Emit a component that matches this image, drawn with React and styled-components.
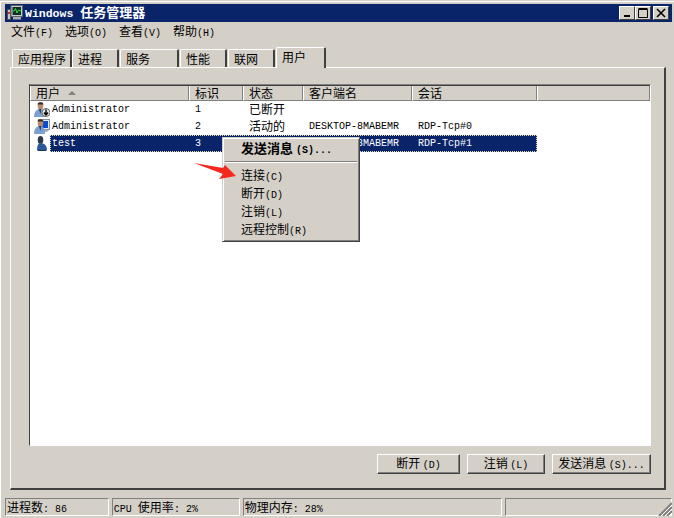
import React from "react";
import styled, { createGlobalStyle } from "styled-components";

const GlobalStyle = createGlobalStyle`
    html, body {
        margin: 0;
        padding: 0;
        background: #d4d0c8;
    }
    body {
        font-family: "Noto Sans CJK SC", "Liberation Sans", sans-serif;
        font-size: 12px;
        color: #000;
    }
`;

const COLUMNS = "139px 54px 60px 109px 125px";

const Window = styled.div`
    position: relative;
    box-sizing: border-box;
    width: 674px;
    height: 518px;
    padding: 3px 2px 2px 5px;
    display: flex;
    flex-direction: column;
    background: #d4d0c8;
    overflow: hidden;
    border-top: 1px solid #d4d0c8;
    box-shadow: inset 1px 1px 0 #fff, inset 2px 0 0 #d4d0c8;
`;

const TitleBar = styled.div`
    height: 18px;
    flex: none;
    display: flex;
    align-items: center;
    background: #0a246a;
    color: #fff;
    font-weight: bold;
    font-size: 13px;
    line-height: 18px;
    padding: 0 3px 0 1px;
`;

const TitleText = styled.span`
    margin-left: 2px;
    white-space: pre;
`;

const TitleLatin = styled.span`
    font-family: "Liberation Mono", monospace;
    font-size: 11.5px;
    margin-right: 4px;
`;

const CaptionGroup = styled.div`
    margin-left: auto;
    display: flex;
`;

const CaptionButton = styled.div`
    box-sizing: border-box;
    width: 16px;
    height: 14px;
    margin-left: ${props => props.$gap || 0}px;
    background: #d4d0c8;
    border-top: 1px solid #fff;
    border-left: 1px solid #fff;
    border-right: 1px solid #404040;
    border-bottom: 1px solid #404040;
    display: flex;
    align-items: center;
    justify-content: center;
    svg { display: block; }
`;

const MenuBar = styled.div`
    height: 21px;
    flex: none;
    display: flex;
    align-items: center;
    padding-left: 6px;
    gap: 12px;
`;

const MenuLabel = styled.span`
    line-height: 18px;
    white-space: pre;
`;

const Key = styled.span`
    font-family: "Liberation Mono", monospace;
    font-size: 10px;
    font-weight: ${props => (props.$bold ? "bold" : "normal")};
`;

const Content = styled.div`
    flex: 1;
    display: flex;
    flex-direction: column;
    padding: 4px 6px 0 5px;
    min-height: 0;
`;

const TabStrip = styled.div`
    height: 20px;
    flex: none;
    display: flex;
    align-items: flex-end;
    padding-left: 2px;
    position: relative;
    z-index: 1;
`;

const Tab = styled.div`
    box-sizing: border-box;
    width: ${props => props.$width}px;
    margin-right: ${props => props.$gap}px;
    height: ${props => (props.$active ? 21 : 18)}px;
    margin-bottom: ${props => (props.$active ? -1 : 0)}px;
    padding-left: 5px;
    background: #d4d0c8;
    border-top: 1px solid #fff;
    border-left: 1px solid #fff;
    border-right: 2px solid #404040;
    border-top-left-radius: 2px;
    border-top-right-radius: 2px;
    line-height: ${props => (props.$active ? 18 : 17)}px;
`;

const Panel = styled.div`
    box-sizing: border-box;
    height: 423px;
    flex: none;
    padding: 16px 13px 16px 18px;
    background: #d4d0c8;
    border-top: 1px solid #fff;
    border-left: 1px solid #fff;
    border-right: 2px solid #404040;
    border-bottom: 2px solid #404040;
    display: flex;
    flex-direction: column;
`;

const ListView = styled.div`
    box-sizing: border-box;
    height: 362px;
    flex: none;
    background: #fff;
    border-top: 1px solid #808080;
    border-left: 1px solid #404040;
    border-right: 1px solid #fff;
    border-bottom: 1px solid #fff;
`;

const ListHeader = styled.div`
    display: flex;
    height: 15px;
    background: #d4d0c8;
    border-top: 1px solid #404040;
    box-sizing: content-box;
`;

const HeaderCell = styled.div`
    box-sizing: border-box;
    flex: ${props => (props.$fill ? 1 : "none")};
    width: ${props => props.$width}px;
    padding-left: 5px;
    border-left: 1px solid #fff;
    border-right: 1px solid #808080;
    border-bottom: 1px solid #808080;
    line-height: 14px;
    display: flex;
    align-items: center;
    gap: 8px;
`;

const SortMark = styled.span`
    width: 0;
    height: 0;
    border-left: 4px solid transparent;
    border-right: 4px solid transparent;
    border-bottom: 4px solid #808080;
`;

const Row = styled.div`
    height: 17px;
    display: flex;
`;

const IconSlot = styled.div`
    width: 20px;
    flex: none;
    svg { display: block; }
`;

const RowBody = styled.div`
    box-sizing: border-box;
    display: grid;
    grid-template-columns: ${COLUMNS};
    grid-template-rows: 17px;
    height: 17px;
    align-items: start;
    color: ${props => (props.$selected ? "#fff" : "#000")};
    background: ${props => (props.$selected ? "#0a246a" : "transparent")};
    outline: ${props => (props.$selected ? "1px dotted #e8e0a8" : "none")};
    outline-offset: -1px;
`;

const Cell = styled.div`
    box-sizing: border-box;
    height: 16px;
    display: flex;
    align-items: center;
    padding-left: ${props => (props.$first ? 2 : 6)}px;
    padding-bottom: ${props => (props.$cjk ? 2 : 0)}px;
    white-space: nowrap;
`;

const Mono = styled.span`
    font-family: "Liberation Mono", monospace;
    font-size: 10px;
`;

const ButtonRow = styled.div`
    margin-top: 8px;
    display: flex;
    justify-content: flex-end;
    gap: 7px;
`;

const Button = styled.div`
    box-sizing: border-box;
    width: ${props => props.$width}px;
    height: 20px;
    background: #d4d0c8;
    border-top: 1px solid #fff;
    border-left: 1px solid #fff;
    border-right: 1px solid #404040;
    border-bottom: 1px solid #404040;
    box-shadow: inset -1px -1px 0 #808080;
    text-align: center;
    line-height: 15px;
    white-space: pre;
`;

const StatusBar = styled.div`
    margin-top: 8px;
    height: 18px;
    flex: none;
    display: flex;
    margin-left: -5px;
    margin-right: -6px;
    gap: 3px;
    position: relative;
`;

const StatusPanel = styled.div`
    box-sizing: border-box;
    width: ${props => props.$width}px;
    height: 18px;
    padding-left: 1px;
    border-top: 1px solid #808080;
    border-left: 1px solid #808080;
    border-right: 1px solid #fff;
    border-bottom: 1px solid #fff;
    line-height: 16px;
    white-space: pre;
    overflow: hidden;
`;

const Grip = styled.svg`
    position: absolute;
    right: 0;
    bottom: 0;
    display: block;
`;

const ContextMenu = styled.div`
    position: absolute;
    left: 222px;
    top: 136px;
    box-sizing: border-box;
    width: 138px;
    height: 105px;
    z-index: 3;
    padding: 1px 2px 0 2px;
    background: #d4d0c8;
    border-top: 1px solid #d4d0c8;
    border-left: 1px solid #d4d0c8;
    border-right: 1px solid #404040;
    border-bottom: 1px solid #404040;
    box-shadow: inset 1px 1px 0 #fff, inset -1px -1px 0 #808080;
`;

const MenuItem = styled.div`
    height: 18px;
    padding-left: 16px;
    line-height: 18px;
    font-weight: ${props => (props.$bold ? "bold" : "normal")};
    font-size: ${props => (props.$bold ? 13 : 12)}px;
    white-space: pre;
`;

const MenuSeparator = styled.div`
    margin: 4px 0 3px;
    height: 1px;
    background: #808080;
    border-bottom: 1px solid #fff;
`;

const Arrow = styled.svg`
    position: absolute;
    left: 190px;
    top: 158px;
    z-index: 4;
    display: block;
`;

const AppIcon = () => (
    <svg width="17" height="16" viewBox="0 0 17 16">
        <rect x="1.5" y="4.5" width="3" height="10" fill="#c8c8c8" stroke="#505050" />
        <rect x="2" y="7" width="2" height="2" fill="#d03030" />
        <rect x="5" y="0.5" width="11.5" height="11" fill="#c4c8cc" stroke="#606468" />
        <rect x="6.5" y="2" width="8.5" height="8" fill="#103020" />
        <path d="M6.5 6 L8 6 L9.5 3.5 L11 8 L12.5 5 L15 6" fill="none" stroke="#30e040" />
        <rect x="7" y="12" width="8" height="2.5" fill="#a8acb0" />
    </svg>
);

const UserIcon = ({ variant }) => {
    if (variant === "dark") {
        return (
            <svg width="20" height="17" viewBox="0 0 20 17">
                <ellipse cx="10.5" cy="5" rx="2.8" ry="4" fill="#30384c" />
                <path d="M7 15.5 C7 10 8.5 8 10.5 8 C14 8 17 10 17 15.5 Z" fill="#2c5a98" />
                <path d="M8 15.5 L16 15.5" stroke="#183058" />
            </svg>
        );
    }
    return (
        <svg width="20" height="17" viewBox="0 0 20 17">
            {variant === "active" && (
                <>
                    <rect x="8.5" y="1.5" width="11" height="10" fill="#e8eaf0" stroke="#8090a8" />
                    <rect x="10" y="3" width="8" height="7" fill="#0c4cd0" />
                    <path d="M11 12 L19 12 L17 14 L11 14 Z" fill="#a8b0c0" />
                </>
            )}
            <ellipse cx="10.5" cy="5" rx="2.8" ry="4" fill="#b98d6c" />
            <path d="M7.5 3.5 C7.5 0.5 13.5 0.5 13.5 3.5 Z" fill="#3a2c24" />
            <path d="M4 16 C4 10.5 7 8 10 8 C13 8 15 10.5 15 16 Z" fill="#7ca0d0" />
            <path d="M9 8 L11 8 L10.5 13 Z" fill="#202c44" />
            {variant === "disconnected" && (
                <>
                    <circle cx="16" cy="11.5" r="4" fill="#e8e8e8" stroke="#606060" />
                    <path d="M16 8.5 L16 13 M14 11.5 L16 14 L18 11.5" fill="none" stroke="#000" strokeWidth="1.4" />
                </>
            )}
        </svg>
    );
};

const TABS = [
    { label: "应用程序", width: 60, gap: 0 },
    { label: "进程", width: 47, gap: 1 },
    { label: "服务", width: 59, gap: 1 },
    { label: "性能", width: 47, gap: 1 },
    { label: "联网", width: 47, gap: 1 },
    { label: "用户", width: 50, gap: 0, active: true },
];

const ROWS = [
    { icon: "disconnected", name: "Administrator", id: "1", state: "已断开", client: "", session: "" },
    { icon: "active", name: "Administrator", id: "2", state: "活动的", client: "DESKTOP-8MABEMR", session: "RDP-Tcp#0" },
    { icon: "dark", name: "test", id: "3", state: "活动的", client: "DESKTOP-8MABEMR", session: "RDP-Tcp#1", selected: true },
];

export default function App() {
    return (
        <Window>
            <GlobalStyle />
            <TitleBar>
                <AppIcon />
                <TitleText>
                    <TitleLatin>Windows</TitleLatin> 任务管理器
                </TitleText>
                <CaptionGroup>
                    <CaptionButton>
                        <svg width="10" height="10" viewBox="0 0 10 10">
                            <rect x="2" y="7" width="6" height="2" fill="#000" />
                        </svg>
                    </CaptionButton>
                    <CaptionButton>
                        <svg width="10" height="10" viewBox="0 0 10 10">
                            <path d="M0.5 1.5 H9.5 V9.5 H0.5 Z M0.5 0.5 H9.5" fill="none" stroke="#000" />
                        </svg>
                    </CaptionButton>
                    <CaptionButton $gap={2}>
                        <svg width="10" height="10" viewBox="0 0 10 10">
                            <path d="M1 1 L9 9 M9 1 L1 9" stroke="#000" strokeWidth="1.6" />
                        </svg>
                    </CaptionButton>
                </CaptionGroup>
            </TitleBar>

            <MenuBar>
                <MenuLabel>文件<Key>(F)</Key></MenuLabel>
                <MenuLabel>选项<Key>(O)</Key></MenuLabel>
                <MenuLabel>查看<Key>(V)</Key></MenuLabel>
                <MenuLabel>帮助<Key>(H)</Key></MenuLabel>
            </MenuBar>

            <Content>
                <TabStrip>
                    {TABS.map(tab => (
                        <Tab key={tab.label} $width={tab.width} $gap={tab.gap} $active={tab.active}>
                            {tab.label}
                        </Tab>
                    ))}
                </TabStrip>

                <Panel>
                    <ListView>
                        <ListHeader>
                            <HeaderCell $width={159}>用户 <SortMark /></HeaderCell>
                            <HeaderCell $width={54}>标识</HeaderCell>
                            <HeaderCell $width={60}>状态</HeaderCell>
                            <HeaderCell $width={109}>客户端名</HeaderCell>
                            <HeaderCell $width={125}>会话</HeaderCell>
                            <HeaderCell $fill />
                        </ListHeader>
                        {ROWS.map((row, i) => (
                            <Row key={i}>
                                <IconSlot>
                                    <UserIcon variant={row.icon} />
                                </IconSlot>
                                <RowBody $selected={row.selected}>
                                    <Cell $first><Mono>{row.name}</Mono></Cell>
                                    <Cell><Mono>{row.id}</Mono></Cell>
                                    <Cell $cjk>{row.state}</Cell>
                                    <Cell><Mono>{row.client}</Mono></Cell>
                                    <Cell><Mono>{row.session}</Mono></Cell>
                                </RowBody>
                            </Row>
                        ))}
                    </ListView>

                    <ButtonRow>
                        <Button $width={83}>断开 <Key>(D)</Key></Button>
                        <Button $width={78}>注销 <Key>(L)</Key></Button>
                        <Button $width={99}>发送消息 <Key>(S)...</Key></Button>
                    </ButtonRow>
                </Panel>

                <StatusBar>
                    <StatusPanel $width={104}>进程数<Key>: 86</Key></StatusPanel>
                    <StatusPanel $width={128}><Key>CPU </Key>使用率<Key>: 2%</Key></StatusPanel>
                    <StatusPanel $width={260}>物理内存<Key>: 28%</Key></StatusPanel>
                    <StatusPanel $width={167} />
                    <Grip width="14" height="14" viewBox="0 0 14 14">
                        <path d="M14 1 L1 14 M14 5 L5 14 M14 9 L9 14" stroke="#808080" strokeWidth="2" />
                        <path d="M14 3 L3 14 M14 7 L7 14 M14 11 L11 14" stroke="#fff" />
                    </Grip>
                </StatusBar>
            </Content>

            <ContextMenu>
                <MenuItem $bold>发送消息 <Key $bold>(S)...</Key></MenuItem>
                <MenuSeparator />
                <MenuItem>连接<Key>(C)</Key></MenuItem>
                <MenuItem>断开<Key>(D)</Key></MenuItem>
                <MenuItem>注销<Key>(L)</Key></MenuItem>
                <MenuItem>远程控制<Key>(R)</Key></MenuItem>
            </ContextMenu>

            <Arrow width="48" height="24" viewBox="0 0 48 24">
                <polygon points="4,4 33,9 35,6 46,17 29,20 33,15" fill="#f5281e" />
            </Arrow>
        </Window>
    );
}
